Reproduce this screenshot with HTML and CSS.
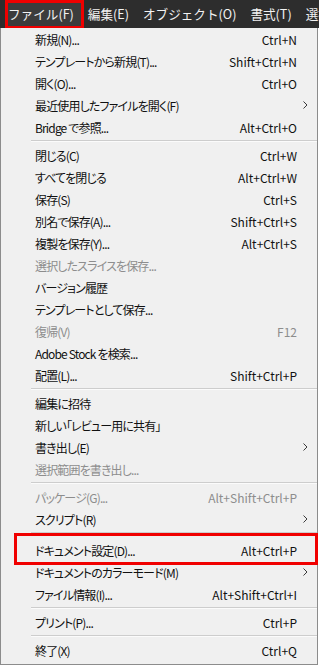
FILE: index.html
```html
<!DOCTYPE html>
<html lang="ja">
  <head>
    <meta charset="UTF-8" />
    <meta name="viewport" content="width=device-width, initial-scale=1.0" />
    <title>ファイル メニュー</title>
    <link rel="stylesheet" href="styles.css">
  </head>
  <body>
    <nav class="menubar">
      <span class="menubar-item is-open">ファイル(F)</span>
      <span class="menubar-item">編集(E)</span>
      <span class="menubar-item">オブジェクト(O)</span>
      <span class="menubar-item">書式(T)</span>
      <span class="menubar-item">選択(S)</span>
    </nav>

    <ul class="menu">
      <li class="menu-item"><span class="label">新規(N)...</span><span class="key">Ctrl+N</span></li>
      <li class="menu-item"><span class="label">テンプレートから新規(T)...</span><span class="key">Shift+Ctrl+N</span></li>
      <li class="menu-item"><span class="label">開く(O)...</span><span class="key">Ctrl+O</span></li>
      <li class="menu-item"><span class="label">最近使用したファイルを開く(F)</span><span class="sub"><svg width="5" height="8" viewBox="0 0 5 8"><path d="M0.5 0.5L4 4L0.5 7.5" /></svg></span></li>
      <li class="menu-item"><span class="label">Bridge で参照...</span><span class="key">Alt+Ctrl+O</span></li>
      <li class="separator"></li>
      <li class="menu-item"><span class="label">閉じる(C)</span><span class="key">Ctrl+W</span></li>
      <li class="menu-item"><span class="label">すべてを閉じる</span><span class="key">Alt+Ctrl+W</span></li>
      <li class="menu-item"><span class="label">保存(S)</span><span class="key">Ctrl+S</span></li>
      <li class="menu-item"><span class="label">別名で保存(A)...</span><span class="key">Shift+Ctrl+S</span></li>
      <li class="menu-item"><span class="label">複製を保存(Y)...</span><span class="key">Alt+Ctrl+S</span></li>
      <li class="menu-item disabled"><span class="label">選択したスライスを保存...</span></li>
      <li class="menu-item"><span class="label">バージョン履歴</span></li>
      <li class="menu-item"><span class="label">テンプレートとして保存...</span></li>
      <li class="menu-item disabled"><span class="label">復帰(V)</span><span class="key">F12</span></li>
      <li class="menu-item"><span class="label">Adobe Stock を検索...</span></li>
      <li class="menu-item"><span class="label">配置(L)...</span><span class="key">Shift+Ctrl+P</span></li>
      <li class="separator"></li>
      <li class="menu-item"><span class="label">編集に招待</span></li>
      <li class="menu-item"><span class="label">新しい「レビュー用に共有」</span></li>
      <li class="menu-item"><span class="label">書き出し(E)</span><span class="sub"><svg width="5" height="8" viewBox="0 0 5 8"><path d="M0.5 0.5L4 4L0.5 7.5" /></svg></span></li>
      <li class="menu-item disabled"><span class="label">選択範囲を書き出し...</span></li>
      <li class="separator"></li>
      <li class="menu-item disabled"><span class="label">パッケージ(G)...</span><span class="key">Alt+Shift+Ctrl+P</span></li>
      <li class="menu-item"><span class="label">スクリプト(R)</span><span class="sub"><svg width="5" height="8" viewBox="0 0 5 8"><path d="M0.5 0.5L4 4L0.5 7.5" /></svg></span></li>
      <li class="separator separator-wide"></li>
      <li class="menu-item marked"><span class="label">ドキュメント設定(D)...</span><span class="key">Alt+Ctrl+P</span></li>
      <li class="menu-item"><span class="label">ドキュメントのカラーモード(M)</span><span class="sub"><svg width="5" height="8" viewBox="0 0 5 8"><path d="M0.5 0.5L4 4L0.5 7.5" /></svg></span></li>
      <li class="menu-item"><span class="label">ファイル情報(I)...</span><span class="key">Alt+Shift+Ctrl+I</span></li>
      <li class="separator"></li>
      <li class="menu-item"><span class="label">プリント(P)...</span><span class="key">Ctrl+P</span></li>
      <li class="separator"></li>
      <li class="menu-item"><span class="label">終了(X)</span><span class="key">Ctrl+Q</span></li>
    </ul>
  </body>
</html>
```

FILE: styles.css
```css
body {
  margin: 0;
  background-color: #ffffff;
  font-family: "Noto Sans CJK JP", "Noto Sans", sans-serif;
  font-size: 12px;
  overflow: hidden;
}

.menubar {
  display: flex;
  gap: 14px;
  height: 28px;
  padding-left: 8px;
  background-color: #2d2d2d;
  color: #f2f2f2;
  font-size: 12.6px;
  line-height: 28px;
  white-space: nowrap;
  overflow: hidden;
}

.menubar-item.is-open {
  position: relative;
  z-index: 0;
}

/* red annotation box drawn over the open menu title */
.menubar-item.is-open::before {
  content: "";
  position: absolute;
  left: -3px;
  right: -10px;
  top: 0;
  bottom: -1px;
  border: 3px solid #f00000;
  background-color: #3c3c3c;
  z-index: -1;
}

.menu {
  list-style: none;
  margin: 0;
  padding: 0 0 3px;
  width: 318px;
  box-sizing: border-box;
  background-color: #f0f0f0;
  border: 1px solid #8c8c8c;
  border-top: none;
  color: #111111;
}

.menu-item {
  display: grid;
  grid-template-columns: 1fr auto 20px;
  align-items: center;
  height: 22px;
  padding-left: 34px;
  white-space: nowrap;
}

/* Meiryo UI has narrow kana, so squeeze the labels a little */
.menu-item .label {
  font-feature-settings: "palt";
  letter-spacing: -0.85px;
}

.menu-item.disabled {
  color: #8d8d8d;
}

.menu-item .sub {
  grid-column: 3;
  display: flex;
  padding-left: 6px;
}

.menu-item .sub path {
  fill: none;
  stroke: #3a3a3a;
  stroke-width: 1;
}

.menu-item.marked {
  position: relative;
}

/* red annotation box around "ドキュメント設定" */
.menu-item.marked::after {
  content: "";
  position: absolute;
  left: 13px;
  right: -1px;
  top: -6px;
  bottom: -4px;
  border: 3px solid #f00000;
}

.separator {
  height: 6px;
  box-sizing: border-box;
  padding-top: 2px;
  margin-left: 30px;
}

.separator::before {
  content: "";
  display: block;
  height: 1px;
  background-color: #cdcdcd;
  border-bottom: 1px solid #fbfbfb;
}

.separator-wide {
  height: 9px;
}
```
